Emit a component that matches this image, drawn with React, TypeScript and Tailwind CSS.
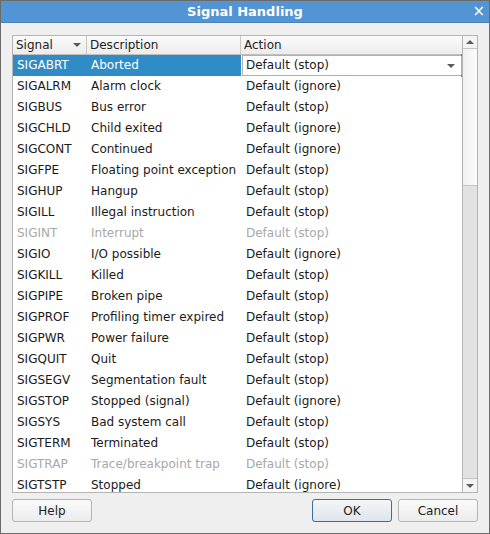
import React from "react"

const signals: [string, string, string, boolean?][] = [
  ["SIGABRT", "Aborted", "Default (stop)"],
  ["SIGALRM", "Alarm clock", "Default (ignore)"],
  ["SIGBUS", "Bus error", "Default (stop)"],
  ["SIGCHLD", "Child exited", "Default (ignore)"],
  ["SIGCONT", "Continued", "Default (ignore)"],
  ["SIGFPE", "Floating point exception", "Default (stop)"],
  ["SIGHUP", "Hangup", "Default (stop)"],
  ["SIGILL", "Illegal instruction", "Default (stop)"],
  ["SIGINT", "Interrupt", "Default (stop)", true],
  ["SIGIO", "I/O possible", "Default (ignore)"],
  ["SIGKILL", "Killed", "Default (stop)"],
  ["SIGPIPE", "Broken pipe", "Default (stop)"],
  ["SIGPROF", "Profiling timer expired", "Default (stop)"],
  ["SIGPWR", "Power failure", "Default (stop)"],
  ["SIGQUIT", "Quit", "Default (stop)"],
  ["SIGSEGV", "Segmentation fault", "Default (stop)"],
  ["SIGSTOP", "Stopped (signal)", "Default (ignore)"],
  ["SIGSYS", "Bad system call", "Default (stop)"],
  ["SIGTERM", "Terminated", "Default (stop)"],
  ["SIGTRAP", "Trace/breakpoint trap", "Default (stop)", true],
  ["SIGTSTP", "Stopped", "Default (ignore)"],
]

function DownArrow() {
  return (
    <svg width="8" height="4" viewBox="0 0 8 4">
      <path d="M0 0 L8 0 L4 4 Z" fill="#5a5a5a" />
    </svg>
  )
}

function UpArrow() {
  return (
    <svg width="8" height="4" viewBox="0 0 8 4">
      <path d="M0 4 L8 4 L4 0 Z" fill="#5a5a5a" />
    </svg>
  )
}

function Button({ label, focused }: { label: string; focused?: boolean }) {
  return (
    <button
      className={
        "w-[80px] h-[23px] rounded-[3px] border text-[12px] text-[#222] " +
        (focused
          ? "border-[#3c6e99] bg-gradient-to-b from-[#f4f6f8] to-[#dfe5eb]"
          : "border-[#b4b4b4] bg-gradient-to-b from-[#fafafa] to-[#ececec]")
      }
    >
      {label}
    </button>
  )
}

export default function App() {
  return (
    <div
      className="w-[490px] h-[534px] flex flex-col bg-[#efefef] border border-[#6b6b6b] overflow-hidden"
      style={{ fontFamily: '"DejaVu Sans", sans-serif' }}
    >
      {/* Title bar */}
      <div className="h-[22px] shrink-0 bg-[#5294d4] border-b border-[#4a82bb] flex items-center relative">
        <div className="flex-1 text-center text-white font-bold text-[13px]">Signal Handling</div>
        <span className="absolute right-[4px] top-[2px] text-white text-[15px] leading-[16px]">×</span>
      </div>

      <div className="flex-1 flex flex-col px-[11px] pt-[12px]">
        {/* Table frame */}
        <div className="w-[466px] h-[458px] border border-[#b4b4b4] bg-white flex overflow-hidden">
          <div className="w-[449px] flex flex-col overflow-hidden">
            {/* Header */}
            <div className="h-[19px] shrink-0 flex bg-gradient-to-b from-[#fbfbfb] to-[#ececec] border-b border-[#c0c0c0] text-[12px] text-[#222] leading-[18px]">
              <div className="w-[74px] flex items-center justify-between pl-[3px] pr-[5px] border-r border-[#c8c8c8]">
                <span>Signal</span>
                <DownArrow />
              </div>
              <div className="w-[154px] pl-[3px] border-r border-[#c8c8c8]">Description</div>
              <div className="flex-1 pl-[3px]">Action</div>
            </div>

            {/* Rows */}
            {signals.map(([name, desc, action, disabled], i) => {
              const selected = i === 0
              const color = disabled ? "text-[#a8a8a8]" : selected ? "text-white" : "text-[#1a1a1a]"
              return (
                <div key={name} className={"h-[21px] shrink-0 flex text-[12px] leading-[21px] " + color}>
                  <div className={"w-[74px] pl-[4px] " + (selected ? "bg-[#308cc6]" : "")}>{name}</div>
                  <div className={"w-[154px] pl-[4px] whitespace-nowrap " + (selected ? "bg-[#308cc6]" : "")}>
                    {desc}
                  </div>
                  {selected ? (
                    <div className="flex-1 relative">
                      <div className="absolute left-[1px] right-0 top-0 h-[21px] bg-white border border-[#b0b0b0] flex items-center justify-between pl-[3px] pr-[6px] text-[#1a1a1a] leading-[19px]">
                        <span>{action}</span>
                        <DownArrow />
                      </div>
                      <span className="absolute right-[-1px] top-[-1px] w-[2px] h-[2px] bg-[#308cc6]" />
                      <span className="absolute right-[-1px] top-[20px] w-[2px] h-[2px] bg-[#308cc6]" />
                    </div>
                  ) : (
                    <div className="flex-1 pl-[5px]">{action}</div>
                  )}
                </div>
              )
            })}
          </div>

          {/* Scrollbar */}
          <div className="w-[15px] flex flex-col border-l border-[#b4b4b4] bg-[#e2e2e2]">
            <div className="h-[13px] shrink-0 flex items-center justify-center bg-[#f4f4f4] border-b border-[#c4c4c4]">
              <UpArrow />
            </div>
            <div className="h-[137px] shrink-0 bg-gradient-to-r from-[#f0f0f0] to-[#fcfcfc] border-b border-[#c4c4c4]" />
            <div className="flex-1" />
            <div className="h-[14px] shrink-0 flex items-center justify-center bg-[#f4f4f4] border-t border-[#c4c4c4]">
              <DownArrow />
            </div>
          </div>
        </div>

        {/* Buttons */}
        <div className="mt-[6px] flex items-center w-[466px]">
          <Button label="Help" />
          <div className="flex-1" />
          <Button label="OK" focused />
          <div className="w-[6px]" />
          <Button label="Cancel" />
        </div>
      </div>
    </div>
  )
}
